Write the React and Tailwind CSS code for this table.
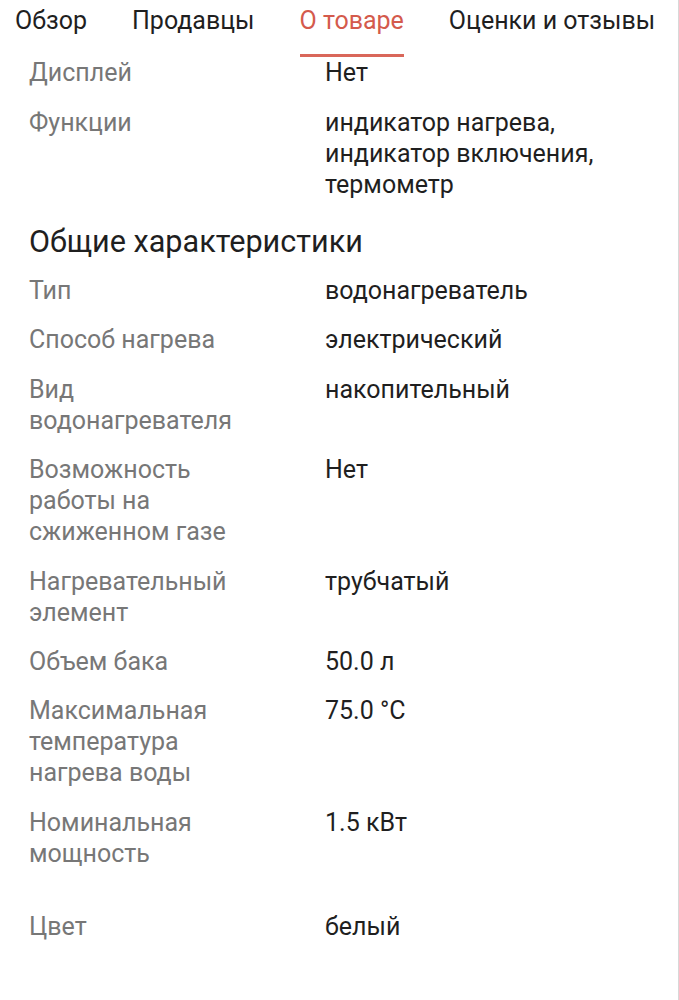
import React from 'react'

const tabs = ['Обзор', 'Продавцы', 'О товаре', 'Оценки и отзывы']

const top = [
  ['Дисплей', 'Нет'],
  ['Функции', 'индикатор нагрева, индикатор включения, термометр'],
]

const general = [
  ['Тип', 'водонагреватель'],
  ['Способ нагрева', 'электрический'],
  ['Вид водонагревателя', 'накопительный'],
  ['Возможность работы на сжиженном газе', 'Нет'],
  ['Нагревательный элемент', 'трубчатый'],
  ['Объем бака', '50.0 л'],
  ['Максимальная температура нагрева воды', '75.0 °C'],
  ['Номинальная мощность', '1.5 кВт'],
]

function Row({ label, value }) {
  return (
    <div className="grid grid-cols-[325px_1fr] leading-[31px]">
      <div className="pl-[29px] pr-[70px] text-[#777777]">{label}</div>
      <div className="pr-[30px] text-[#1f1f1f]">{value}</div>
    </div>
  )
}

export default function App() {
  return (
    <div className="w-[679px] h-[1000px] bg-white border-r border-[#d8d8d8] overflow-hidden text-[25px] font-['Roboto',sans-serif]">
      <div className="flex h-[57px]">
        {tabs.map((t, i) => (
          <div key={t} className={`flex flex-col items-center ${i === 0 ? 'pl-[15px] pr-[22.5px]' : 'px-[22.5px]'}`}>
            <div className={`pt-[5px] leading-[31px] ${i === 2 ? 'text-[#d45a4c]' : 'text-[#1f1f1f]'}`}>{t}</div>
            <div className={`mt-auto h-[3px] w-full ${i === 2 ? 'bg-[#d9675a]' : ''}`} />
          </div>
        ))}
      </div>
      <div className="flex flex-col gap-[19px]">
        {top.map(([l, v]) => <Row key={l} label={l} value={v} />)}
      </div>
      <div className="pl-[29px] pt-[24px] pb-[15px] text-[30.6px] leading-[36px] text-[#1f1f1f]">Общие характеристики</div>
      <div className="flex flex-col gap-[18.4px]">
        {general.map(([l, v]) => <Row key={l} label={l} value={v} />)}
        <div className="h-[5px]" />
        <Row label="Цвет" value="белый" />
      </div>
    </div>
  )
}
